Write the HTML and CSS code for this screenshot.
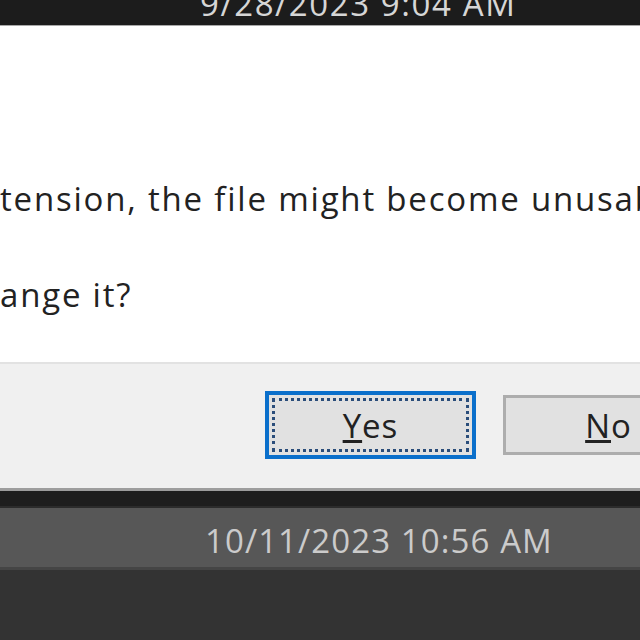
FILE: index.html
```html
<!DOCTYPE html>
<html lang="en">
<head>
<meta charset="UTF-8">
<title>Rename</title>
<link rel="stylesheet" href="styles.css">
</head>
<body>
<div class="topbar">
  <span class="stamp">9/28/2023 9:04 AM</span>
</div>

<div class="dialog">
  <div class="message">
    <p class="line">tension, the file might become unusable.</p>
    <p class="line">ange it?</p>
  </div>
  <div class="buttons">
    <button class="btn default"><span class="focus"><u>Y</u>es</span></button>
    <button class="btn"><span class="focus"><u>N</u>o</span></button>
  </div>
</div>

<div class="list">
  <div class="edge"></div>
  <div class="row">
    <span class="stamp">10/11/2023 10:56 AM</span>
  </div>
  <div class="rest"></div>
</div>
</body>
</html>
```

FILE: styles.css
```css
body {
  margin: 0;
  padding: 0;
  width: 640px;
  height: 640px;
  overflow: hidden;
  font-family: 'Open Sans', 'Liberation Sans', sans-serif;
  background: #333;
}

.topbar {
  height: 25px;
  background: #1c1c1c;
  border-bottom: 1px solid #a8a8a8;
  overflow: hidden;
  padding-left: 200px;
}

.topbar .stamp {
  display: block;
  font-size: 33px;
  line-height: 33px;
  letter-spacing: 1.6px;
  margin-top: -13px;
  color: #d6d6d6;
}

.dialog {
  background: #fff;
}

.message {
  height: 336px;
  overflow: hidden;
  white-space: nowrap;
  color: #222;
  font-size: 33px;
  letter-spacing: 1.8px;
  padding-top: 149px;
  box-sizing: border-box;
}

.line {
  margin: 0 0 48px 0;
  line-height: 48px;
}

.buttons {
  height: 126px;
  background: #f0f0f0;
  border-top: 2px solid #e2e2e2;
  box-sizing: border-box;
  display: flex;
  align-items: center;
  padding-left: 265px;
  gap: 27px;
  overflow: hidden;
}

.btn {
  flex: none;
  width: 211px;
  height: 60px;
  background: #e1e1e1;
  border: 3px solid #adadad;
  font-family: inherit;
  font-size: 33px;
  letter-spacing: 1px;
  color: #222;
  padding: 0;
  margin-top: -2px;
}

.btn.default {
  height: 68px;
  border: 4px solid #0a6fcb;
  padding: 3px;
}

.btn.default .focus {
  border: 3px dotted #2a4d7a;
}

.focus {
  display: flex;
  align-items: center;
  justify-content: center;
  height: 100%;
  box-sizing: border-box;
}

.list {
  border-top: 3px solid #9d9d9d;
}

.edge {
  height: 15px;
  background: #1e1e1e;
  border-bottom: 2px solid #2c2c2c;
}

.row {
  height: 62px;
  background: #575757;
  border-bottom: 3px solid #454545;
  padding-left: 205px;
  padding-top: 6px;
  box-sizing: border-box;
  display: flex;
  align-items: center;
}

.row .stamp {
  font-size: 33px;
  letter-spacing: 1.1px;
  color: #cbcbcb;
}

.rest {
  height: 80px;
  background: #333;
}
```
